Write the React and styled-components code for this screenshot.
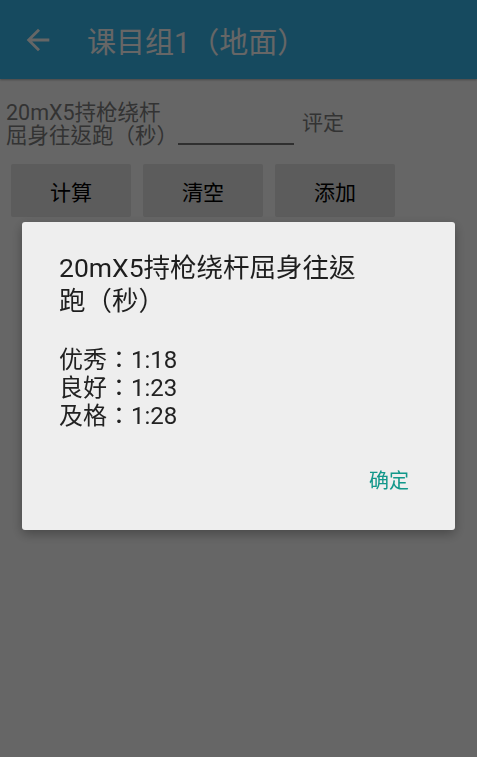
import React from 'react';
import styled, { createGlobalStyle } from "styled-components";

const Global = createGlobalStyle`
  html, body {
    margin: 0;
    padding: 0;
    background: #ffffff;
    font-family: Roboto, "Noto Sans CJK TC", sans-serif;
  }
`

const S = {};

S.Page = styled.div`
  width: 477px;
  height: 757px;
  background: #ffffff;
  overflow: hidden;
`

S.AppBar = styled.div`
  height: 79px;
  background: #37b9ed;
  display: flex;
  align-items: center;
  box-shadow: 0 1px 2px rgba(0, 0, 0, 0.3);
`

S.Back = styled.div`
  width: 34px;
  height: 34px;
  margin-left: 21px;
  margin-top: 1px;
  color: #ffffff;
  display: flex;
`

S.Title = styled.h1`
  margin: 0 0 0 32px;
  font-size: 29px;
  font-weight: 400;
  color: #ffffff;
`

S.Form = styled.div`
  display: flex;
  align-items: flex-end;
  padding: 22px 0 0 6px;
`

S.Label = styled.div`
  font-size: 21.5px;
  line-height: 23px;
  color: #808080;
`

S.Input = styled.div`
  width: 116px;
  height: 2px;
  background: #767676;
  margin: 0 8px 2px 0;
`

S.Grade = styled.div`
  font-size: 21px;
  line-height: 23px;
  color: #808080;
  align-self: flex-start;
  margin-top: 11px;
`

S.Buttons = styled.div`
  display: flex;
  gap: 12px;
  padding: 17px 0 0 11px;
`

S.Button = styled.button`
  width: 120px;
  height: 53px;
  border: none;
  border-radius: 2px;
  background: #e5e5e5;
  color: #000000;
  font-family: inherit;
  font-size: 21px;
  padding: 0;
`

S.Scrim = styled.div`
  position: fixed;
  inset: 0;
  background: rgba(0, 0, 0, 0.6);
  display: flex;
  align-items: flex-start;
  justify-content: center;
  padding-top: 222px;
`

S.Dialog = styled.div`
  width: 433px;
  background: #eeeeee;
  border-radius: 3px;
  box-sizing: border-box;
  padding: 29px 37px 0;
  box-shadow: 0 4px 12px rgba(0, 0, 0, 0.3);
`

S.DialogTitle = styled.div`
  font-size: 26.5px;
  line-height: 33px;
  color: #1e1e1e;
`

S.DialogBody = styled.div`
  margin-top: 29px;
  font-size: 24px;
  line-height: 28px;
  color: #222222;
`

S.Actions = styled.div`
  display: flex;
  justify-content: flex-end;
  padding: 39px 0 37px;
`

S.TextButton = styled.button`
  border: none;
  background: none;
  padding: 0 9px 0 0;
  font-family: inherit;
  font-size: 20px;
  line-height: 24px;
  color: #11978a;
`

export default function App() {
    return (
        <S.Page>
            <Global />
            <S.AppBar>
                <S.Back>
                    <svg width="34" height="34" viewBox="0 0 24 24" fill="currentColor">
                        <path d="M20 11H7.83l5.59-5.59L12 4l-8 8 8 8 1.41-1.41L7.83 13H20v-2z" />
                    </svg>
                </S.Back>
                <S.Title>课目组1（地面）</S.Title>
            </S.AppBar>
            <S.Form>
                <S.Label>20mX5持枪绕杆<br />屈身往返跑（秒）</S.Label>
                <S.Input />
                <S.Grade>评定</S.Grade>
            </S.Form>
            <S.Buttons>
                <S.Button>计算</S.Button>
                <S.Button>清空</S.Button>
                <S.Button>添加</S.Button>
            </S.Buttons>
            <S.Scrim>
                <S.Dialog>
                    <S.DialogTitle>20mX5持枪绕杆屈身往返<br />跑（秒）</S.DialogTitle>
                    <S.DialogBody>
                        优秀：1:18<br />
                        良好：1:23<br />
                        及格：1:28
                    </S.DialogBody>
                    <S.Actions>
                        <S.TextButton>确定</S.TextButton>
                    </S.Actions>
                </S.Dialog>
            </S.Scrim>
        </S.Page>
    )
}
